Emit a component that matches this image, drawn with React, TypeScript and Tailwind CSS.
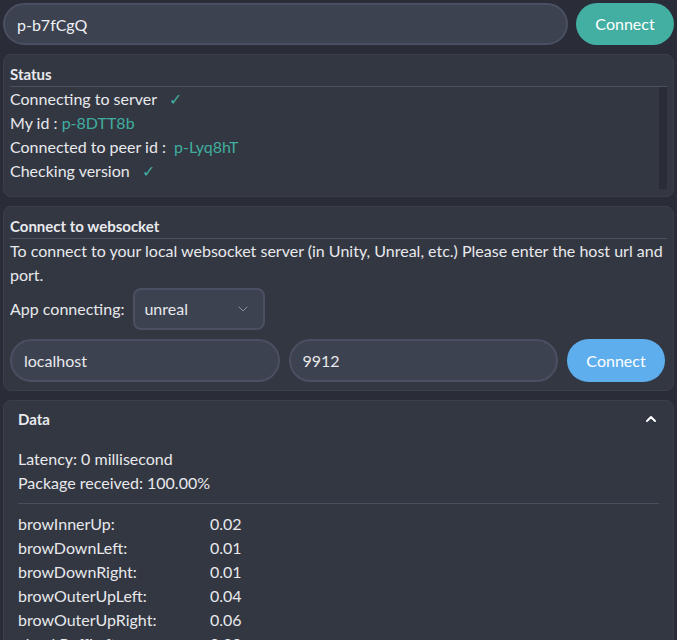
import React from 'react';
import { ChevronDown, ChevronUp } from 'lucide-react';

const blendshapes: [string, string][] = [
  ['browInnerUp:', '0.02'],
  ['browDownLeft:', '0.01'],
  ['browDownRight:', '0.01'],
  ['browOuterUpLeft:', '0.04'],
  ['browOuterUpRight:', '0.06'],
  ['cheekPuffLeft:', '0.00'],
  ['cheekPuffRight:', '0.00'],
];

export default function App() {
  return (
    <div className="h-[640px] overflow-hidden bg-[#2a2d37] text-[#e8e9ec] p-[3px] flex flex-col gap-[9px] text-[16px]" style={{ fontFamily: 'Lato, "Open Sans", sans-serif' }}>
      {/* peer id row */}
      <div className="flex gap-2 shrink-0">
        <input
          defaultValue="p-b7fCgQ"
          className="flex-1 h-[42px] rounded-full bg-[#3d4250] border-2 border-[#4a5062] px-[12px] text-[16px] text-[#eef0f3] outline-none"
        />
        <button className="w-[98px] h-[42px] rounded-full bg-[#43aea2] text-white text-[16px]">Connect</button>
      </div>

      {/* Status */}
      <div className="h-[143px] shrink-0 rounded-lg bg-[#333742] border border-[#3b3f4b] px-[6px] pt-[8px] pb-[6px] flex flex-col">
        <div className="font-bold text-[15px] leading-[22px] pb-[1px] border-b border-[#4c5161]">Status</div>
        <div className="flex flex-1">
          <div className="flex-1 leading-[24px]">
            <div>Connecting to server <span className="text-[#3fae9f] ml-2">✓</span></div>
            <div>My id : <span className="text-[#3fae9f]">p-8DTT8b</span></div>
            <div>Connected to peer id : <span className="text-[#3fae9f] ml-1">p-Lyq8hT</span></div>
            <div>Checking version <span className="text-[#3fae9f] ml-2">✓</span></div>
          </div>
          <div className="w-[8px] bg-[#2a2d36] mb-[1px]" />
        </div>
      </div>

      {/* Websocket */}
      <div className="h-[185px] shrink-0 rounded-lg bg-[#333742] border border-[#3b3f4b] px-[6px] pt-[8px] flex flex-col">
        <div className="font-bold text-[15px] leading-[22px] pb-[1px] border-b border-[#4c5161]">Connect to websocket</div>
        <p className="leading-[24px] pr-[2px]">
          To connect to your local websocket server (in Unity, Unreal, etc.) Please enter the host url and port.
        </p>
        <div className="flex items-center gap-[9px] mt-[1px]">
          <span>App connecting:</span>
          <div className="w-[132px] h-[42px] rounded-lg bg-[#3d4250] border-2 border-[#4a5062] flex items-center justify-between pl-[9px] pr-[12px]">
            <span>unreal</span>
            <ChevronDown className="w-4 h-4 text-[#8a90a0]" strokeWidth={1.5} />
          </div>
        </div>
        <div className="flex gap-[9px] mt-[9px] pr-[2px]">
          <input
            defaultValue="localhost"
            className="flex-1 h-[43px] rounded-full bg-[#3d4250] border-2 border-[#4a5062] px-[12px] text-[16px] outline-none"
          />
          <input
            defaultValue="9912"
            className="flex-1 h-[43px] rounded-full bg-[#3d4250] border-2 border-[#4a5062] px-[12px] text-[16px] outline-none"
          />
          <button className="w-[98px] h-[43px] rounded-full bg-[#5eaeee] text-white">Connect</button>
        </div>
      </div>

      {/* Data */}
      <div className="flex-1 rounded-lg bg-[#333742] border border-[#3b3f4b] px-[14px] pt-[6px]">
        <div className="flex items-center justify-between h-[24px]">
          <span className="font-bold text-[15px]">Data</span>
          <ChevronUp className="w-4 h-4 text-white" strokeWidth={3} />
        </div>
        <div className="mt-[16px] leading-[24px] pb-[8px] border-b border-[#4a4f5d]">
          <div>Latency: 0 millisecond</div>
          <div>Package received: 100.00%</div>
        </div>
        <div className="pt-[8px] leading-[24px]">
          {blendshapes.map(([k, v]) => (
            <div key={k} className="flex">
              <span className="w-[192px]">{k}</span>
              <span>{v}</span>
            </div>
          ))}
        </div>
      </div>
    </div>
  );
}
